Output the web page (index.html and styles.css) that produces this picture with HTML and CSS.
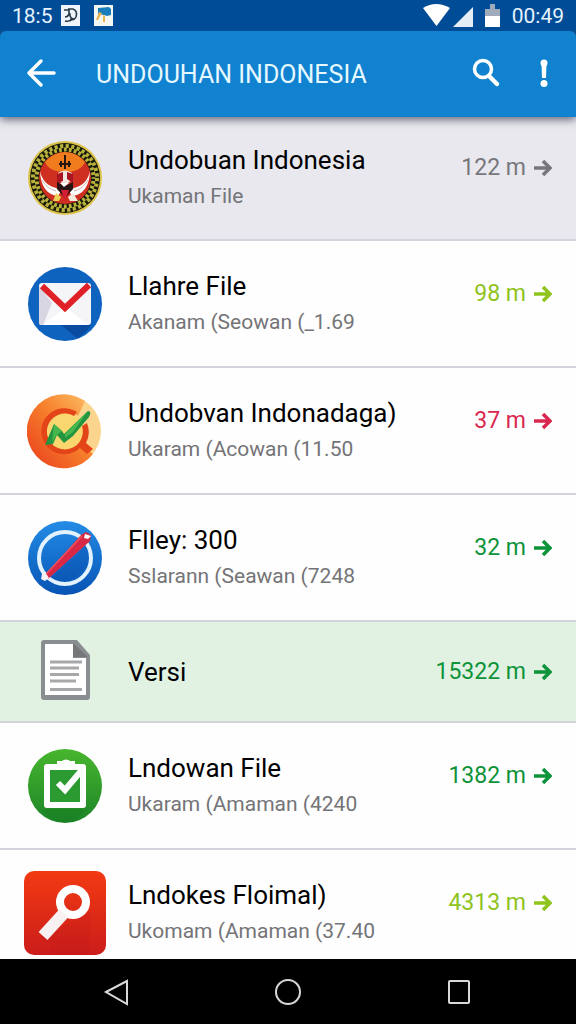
FILE: index.html
```html
<!DOCTYPE html>
<html lang="id">
<head>
<meta charset="UTF-8">
<meta name="viewport" content="width=device-width, initial-scale=1">
<title>Undouhan Indonesia</title>
<link rel="stylesheet" href="styles.css">
</head>
<body>
<svg width="0" height="0" class="defs" aria-hidden="true">
  <defs>
    <linearGradient id="blue" x1="0" y1="0" x2="0" y2="1"><stop offset="0" stop-color="#248ce6"/><stop offset="1" stop-color="#0754b4"/></linearGradient>
    <linearGradient id="green" x1="0" y1="0" x2="0" y2="1"><stop offset="0" stop-color="#48b52e"/><stop offset="1" stop-color="#1d8527"/></linearGradient>
    <linearGradient id="red" x1="0" y1="0" x2="0" y2="1"><stop offset="0" stop-color="#f23a12"/><stop offset="1" stop-color="#cb1d1b"/></linearGradient>
    <linearGradient id="orange" x1="1" y1="0" x2="0" y2="1"><stop offset="0" stop-color="#fcc36b"/><stop offset=".45" stop-color="#f7802c"/><stop offset="1" stop-color="#e83b1c"/></linearGradient>
    <symbol id="arrow" viewBox="0 0 18 18"><path d="M0 9h15M9 2l7 7-7 7" fill="none" stroke="currentColor" stroke-width="3.500"/></symbol>
  </defs>
</svg>

<div class="status-bar">
  <span class="clock">18:5</span>
  <svg class="status-icon" viewBox="0 0 19 21"><path d="M0 0h19v21H0z" fill="#eef4fa"/><path d="M3 5h5v4q-1 3-4 3M7 4h5q5 2 3 8-2 4-6 2M4 16q5 1 8-2-4-2-3-6" fill="none" stroke="#283848" stroke-width="1.6"/></svg>
  <svg class="status-icon second" viewBox="0 0 19 21"><path d="M0 0h19v21H0z" fill="#f5f7f3"/><path d="M4 3l11-1 2 2v6l-4 1-3-1-6-1z" fill="#187dbb"/><path d="M5 7l3 1-4 7H2zM9 10l2 1v6H9z" fill="#e8b24e"/></svg>
  <span class="spacer"></span>
  <svg class="signal" viewBox="0 0 79 24"><path d="M0 4q13-8 27 0L13.500 22z" fill="#fff"/><path d="M30 23L50 3v20z" fill="#e5edf5"/><path d="M62 5h5V0h5v5h5v7H62z" fill="#9fabba"/><path d="M62 12h15v11H62z" fill="#fff"/></svg>
  <span class="clock small">00:49</span>
</div>

<header class="app-bar">
  <button class="icon-btn" aria-label="Kembali"><svg width="32" height="32" viewBox="0 0 32 32"><path d="M28 15H3M15 3L3 15l12 12" fill="none" stroke="#fff" stroke-width="3.500" stroke-linecap="round" stroke-linejoin="round"/></svg></button>
  <h1>UNDOUHAN INDONESIA</h1>
  <button class="icon-btn" aria-label="Cari"><svg width="32" height="32" viewBox="0 0 32 32"><circle cx="13" cy="11" r="8.500" fill="none" stroke="#fff" stroke-width="3.500"/><path d="M19 18l8 8" stroke="#fff" stroke-width="4.500" stroke-linecap="round"/></svg></button>
  <button class="icon-btn more" aria-label="Menu"><svg width="12" height="32" viewBox="0 0 12 32"><circle cx="6" cy="5" r="3.500" fill="#fff"/><path d="M3.500 5h5L8 20H4z" fill="#fff"/><circle cx="6" cy="25.500" r="3.500" fill="#fff"/></svg></button>
</header>

<main class="list">
  <a class="row first" href="#">
    <svg class="icon" viewBox="0 0 76 76">
      <circle cx="38" cy="38" r="37" fill="#dcc34a"/>
      <circle cx="38" cy="38" r="35" fill="#17180c"/>
      <circle cx="38" cy="38" r="32" fill="none" stroke="#b7b13c" stroke-width="4" stroke-dasharray="3.200 2.400"/>
      <circle cx="38" cy="38" r="28.500" fill="none" stroke="#b7b13c" stroke-width="4" stroke-dasharray="2.800 2.200" stroke-dashoffset="2"/>
      <circle cx="38" cy="38" r="26" fill="#cf2f20"/>
      <path d="M18 22a25 25 0 0 1 40 0q-4 10-20 10t-20-10z" fill="#f17c1e"/>
      <path d="M13 31q3 14 16 17l5 3-3 5q-17-2-18-25zM63 31q-3 14-16 17l-5 3 3 5q17-2 18-25z" fill="#fff"/>
      <path d="M15 40q5 9 14 11M61 40q-5 9-14 11" fill="none" stroke="#cdb5ad"/>
      <path d="M31 33q7-5 14 0v7l-4 3h-6l-4-3z" fill="#f2e6e0"/>
      <path d="M38 15v14M32 24h12M34 21v6M42 21v6" stroke="#241710" stroke-width="2"/>
      <path d="M30 34l6-2v9l-6 2zM46 34l-6-2v7l6 4z" fill="#a91520"/>
      <path d="M30 42l8 4 8-4v7l-8 9-8-9z" fill="#281414"/>
      <path d="M33 43h9l-5 4z" fill="#fff"/>
      <path d="M34 50h8l-4 11z" fill="#d31e35"/>
      <path d="M29 53l5 4-2 4h-6z" fill="#ecd058"/>
      <path d="M46 53l-5 4 2 4h8z" fill="#f4eae0"/>
    </svg>
    <div class="text"><h2>Undobuan Indonesia</h2><p>Ukaman File</p></div>
    <span class="meta gray">122 m <svg><use href="#arrow"/></svg></span>
  </a>

  <a class="row" href="#">
    <svg class="icon" viewBox="0 0 76 76">
      <circle cx="38" cy="38" r="37" fill="#0e63bf"/>
      <path d="M34 59h30q-6 10-14 13z" fill="#084b9f"/>
      <rect x="12" y="17" width="52" height="42" rx="3" fill="#f5f4f6"/>
      <path d="M12 20l13 17-9 22h-3q-1 0-1-3z" fill="#d8d6e3"/>
      <path d="M16 59l22-18 24 18z" fill="#fff"/>
      <path d="M15 20l23 22 24-23" fill="none" stroke="#df2026" stroke-width="6"/>
    </svg>
    <div class="text"><h2>Llahre File</h2><p>Akanam (Seowan (_1.69</p></div>
    <span class="meta lime">98 m <svg><use href="#arrow"/></svg></span>
  </a>

  <a class="row" href="#">
    <svg class="icon" viewBox="0 0 76 76">
      <circle cx="38" cy="38" r="36" fill="#fbd58e"/>
      <path d="M58 8A37 37 0 1 0 66 61L53 49A19 19 0 1 1 51 23z" fill="url(#orange)"/>
      <circle cx="38" cy="38" r="19" fill="#fad66f"/>
      <path d="M50 19A23 23 0 1 0 53 55l7 6 6-5-7-6a24 24 0 0 0 1-20l-5 3A18 18 0 1 1 47 23z" fill="#e34418"/>
      <path d="M18 52l9-21 8 7 2 3 24-23q4 0 1 6L46 43l-9 7-7-8-4 9z" fill="#239440"/>
      <path d="M27 31l8 7-5 4-5 7zM38 41l23-23-15 21-8 6z" fill="#47b64d"/>
    </svg>
    <div class="text"><h2>Undobvan Indonadaga)</h2><p>Ukaram (Acowan (11.50</p></div>
    <span class="meta crimson">37 m <svg><use href="#arrow"/></svg></span>
  </a>

  <a class="row" href="#">
    <svg class="icon" viewBox="0 0 76 76">
      <circle cx="38" cy="38" r="37" fill="url(#blue)"/>
      <path d="M22 60L62 22q5 20-9 32-13 11-31 6z" fill="#0a4cac" opacity=".35"/>
      <circle cx="38" cy="38" r="26" fill="none" stroke="#e3f2ff" stroke-width="4"/>
      <path d="M17 56L54 15l5-3 5 3-1 6-42 38z" fill="#d92845"/>
      <path d="M18 55L55 16" stroke="#f0505f" stroke-width="1.500"/>
      <path d="M58 14l-1 4 4 1 3-3-3-1z" fill="#fff"/>
      <path d="M15 54l3-2 4 6-4 3-4-2z" fill="#f8f2f4"/>
    </svg>
    <div class="text"><h2>Flley: 300</h2><p>Sslarann (Seawan (7248</p></div>
    <span class="meta green">32 m <svg><use href="#arrow"/></svg></span>
  </a>

  <a class="row short" href="#">
    <svg class="icon" viewBox="0 0 76 76">
      <path d="M17 6h33l13 15v42q0 3-3 3H17q-3 0-3-3V9q0-3 3-3z" fill="#8b8e91"/>
      <path d="M18 10h28v14h13v37H18z" fill="#fff"/>
      <path d="M46 9l15 14H46z" fill="#74787b"/>
      <path d="M23 28h32M23 34h29M23 40.500h29M23 47h26M23 55.500h32" stroke="#a6a8aa" stroke-width="3"/>
    </svg>
    <div class="text"><h2>Versi</h2></div>
    <span class="meta green">15322 m <svg><use href="#arrow"/></svg></span>
  </a>

  <a class="row" href="#">
    <svg class="icon" viewBox="0 0 76 76">
      <circle cx="38" cy="38" r="37" fill="url(#green)"/>
      <path d="M19 61h42l-14 12q-20 5-32-11z" fill="#11731e" opacity=".25"/>
      <rect x="20" y="19" width="36" height="38" fill="#2b9a31" stroke="#fff" stroke-width="6" stroke-linejoin="round"/>
      <path d="M31 18v-4h4q4-3 8 0h4v4z" fill="#fff" stroke="#fff" stroke-width="2"/>
      <path d="M31 35l7 7 16-19" fill="none" stroke="#fff" stroke-width="6"/>
    </svg>
    <div class="text"><h2>Lndowan File</h2><p>Ukaram (Amaman (4240</p></div>
    <span class="meta green">1382 m <svg><use href="#arrow"/></svg></span>
  </a>

  <a class="row" href="#">
    <svg class="icon square" viewBox="0 0 82 84">
      <rect width="82" height="84" rx="10" fill="url(#red)"/>
      <path d="M17 67l11 6-3 11h40L67 40z" fill="#a91416" opacity=".12"/>
      <circle cx="49" cy="31" r="13" fill="none" stroke="#fff" stroke-width="8"/>
      <path d="M19 65l21-23" stroke="#f7f1f2" stroke-width="12"/>
    </svg>
    <div class="text"><h2>Lndokes Floimal)</h2><p>Ukomam (Amaman (37.40</p></div>
    <span class="meta lime">4313 m <svg><use href="#arrow"/></svg></span>
  </a>
</main>

<nav class="nav-bar">
  <button aria-label="Kembali"><svg width="28" height="28" viewBox="0 0 28 28"><path d="M3 14L24 3v23z" /></svg></button>
  <button aria-label="Beranda"><svg width="28" height="28" viewBox="0 0 28 28"><circle cx="14" cy="14" r="12"/></svg></button>
  <button aria-label="Terbaru"><svg width="28" height="28" viewBox="0 0 28 28"><rect x="4" y="3" width="20" height="22" rx="1"/></svg></button>
</nav>
</body>
</html>
```
FILE: styles.css
```css
* {
  box-sizing: border-box;
}
body {
  margin: 0;
  height: 100vh;
  display: flex;
  flex-direction: column;
  overflow: hidden;
  background: #004c96;
  font-family: Roboto, "Liberation Sans", sans-serif;
}
h1, h2, p {
  margin: 0;
  font-weight: 400;
}
button {
  padding: 0;
  border: none;
  background: none;
  cursor: pointer;
}
svg {
  display: block;
  flex: none;
}
.defs {
  position: absolute;
}

/* top bars */
.status-bar {
  flex: none;
  height: 31px;
  padding: 0 12px;
  display: flex;
  align-items: center;
  color: #e4f3ff;
}
.clock {
  font-size: 21px;
  line-height: 24px;
}
.clock.small {
  margin-left: 10px;
}
.status-icon {
  width: 19px;
  height: 21px;
  margin-left: 8px;
}
.status-icon.second {
  margin-left: 14px;
}
.spacer {
  flex: 1;
}
.signal {
  width: 79px;
  height: 24px;
}
.app-bar {
  flex: none;
  height: 86px;
  padding: 0 26px;
  display: flex;
  align-items: center;
  background: #1082d0;
  border-radius: 6px 6px 0 0;
  box-shadow: 0 2px 10px #55556a;
  clip-path: inset(0 0 -16px 0);
  z-index: 1;
}
.app-bar h1 {
  flex: 1;
  margin-left: 38px;
  color: #e6f8ff;
  font-size: 25px;
  white-space: nowrap;
}
.icon-btn.more {
  margin-left: 36px;
}

/* list */
.list {
  flex: 1;
  min-height: 0;
  overflow: hidden;
  background: #fefefe;
}
.row {
  height: 127px;
  padding: 0 24px;
  display: flex;
  align-items: center;
  border-bottom: 2px solid #d3d3dc;
  color: #000;
  text-decoration: none;
}
.row.first {
  height: 124px;
  background: #e8e8ee;
}
.row.short {
  height: 101px;
  background: #e1f2e3;
}
.icon {
  width: 76px;
  height: 76px;
  margin: 0 3px;
}
.icon.square {
  width: 82px;
  height: 84px;
  margin: 0;
}
.text {
  flex: 1;
  margin-left: 22px;
  white-space: nowrap;
}
.text h2 {
  font-size: 26px;
  line-height: 36px;
}
.text p {
  color: #747477;
  font-size: 21px;
  line-height: 36px;
}
.meta {
  display: flex;
  align-items: center;
  gap: 8px;
  margin-bottom: 20px;
  font-size: 23px;
  line-height: 28px;
}
.short .meta {
  margin-bottom: 0;
}
.meta svg {
  width: 18px;
  height: 18px;
}
.gray { color: #77777b; }
.lime { color: #8fc31d; }
.crimson { color: #d92850; }
.green { color: #0d9339; }

/* system navigation */
.nav-bar {
  flex: none;
  height: 65px;
  padding: 0 32px;
  display: grid;
  grid-template-columns: repeat(3, 1fr);
  justify-items: center;
  align-items: center;
  background: #000;
}
.nav-bar svg {
  fill: none;
  stroke: #d8d8d8;
  stroke-width: 2;
}
```
